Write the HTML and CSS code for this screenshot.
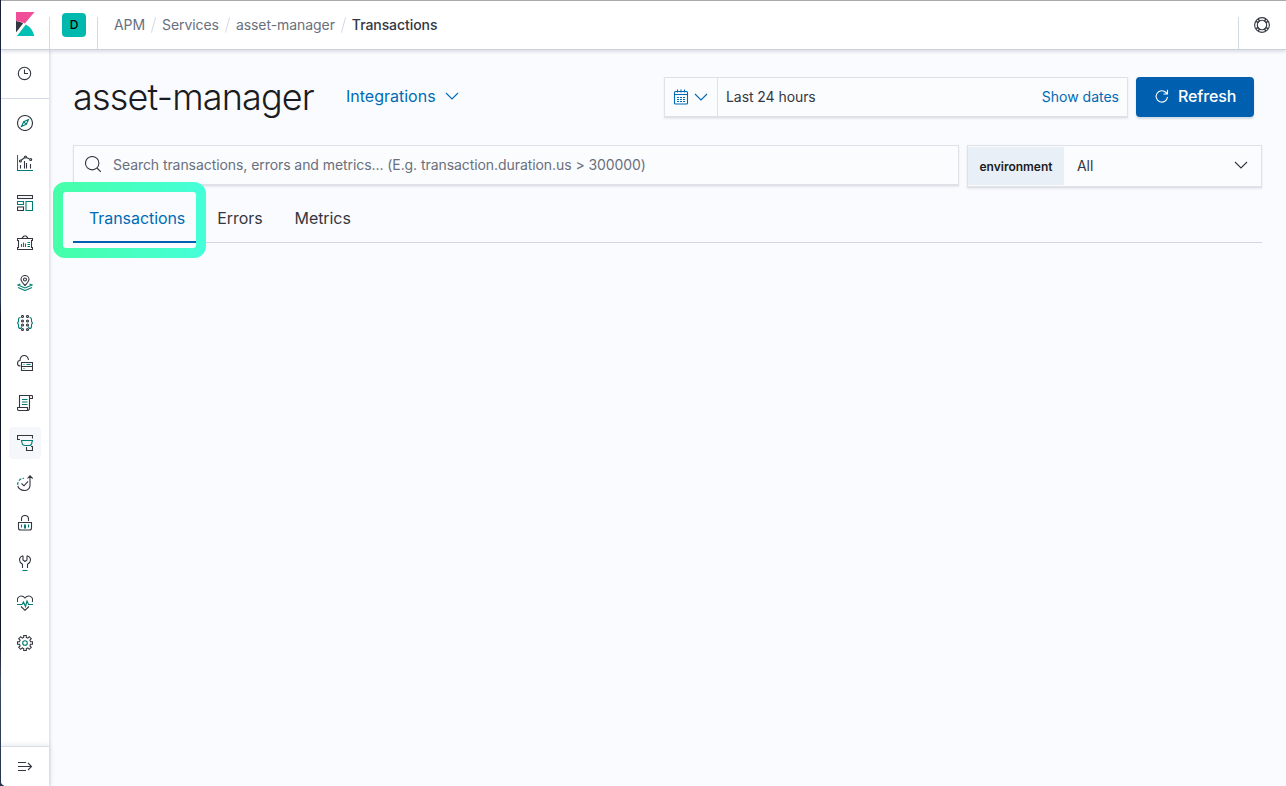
FILE: index.html
```html
<!DOCTYPE html>
<html lang="en">
<head>
<meta charset="utf-8">
<title>asset-manager - APM</title>
<link rel="stylesheet" href="styles.css">
</head>
<body>
<div class="app">
  <header class="header">
    <a class="logo"><svg width="24" height="26" viewBox="0 0 24 26"><path fill="#343741" d="M3 10v11.500L10.200 12.300A14 14 0 0 0 3 10z"/><path fill="#f04e98" d="M3 1h18.500L11.800 12.600A16 16 0 0 0 3 10z"/><path fill="#00bfb3" d="M12.800 13.500L4 25h17.300a17 17 0 0 0-8.500-11.500z"/></svg></a>
    <div class="space"><span class="avatar">D</span></div>
    <nav class="crumbs"><a>APM</a><i></i><a>Services</a><i></i><a>asset-manager</a><i></i><b>Transactions</b></nav>
    <div class="help"><svg class="icon" viewBox="0 0 16 16"><circle cx="8" cy="8" r="7.400"/><circle cx="8" cy="8" r="4.700"/><path stroke-width="1.500" d="M4.300 2l1.400 2.500M2 4.300l2.500 1.400M11.700 2l-1.400 2.500M14 4.300l-2.500 1.400M4.300 14l1.400-2.500M2 11.700l2.500-1.400M11.700 14l-1.400-2.500M14 11.700l-2.500-1.400"/></svg></div>
  </header>
  <aside class="side">
    <div class="recent"><svg class="icon" viewBox="0 0 16 16"><circle cx="7.500" cy="8.400" r="6.200"/><path d="M7.500 4.500v4h3.500"/></svg></div>
    <nav class="apps">
      <a><svg class="icon" viewBox="0 0 16 16"><circle cx="8" cy="8" r="7.500"/><path class="teal" d="M11.500 4.500L9.300 9.300 4.500 11.500l2.200-4.800zM6.700 6.700l2.600 2.600"/></svg></a>
      <a><svg class="icon" viewBox="0 0 16 16"><path class="teal" d="M.5 0v15.500H16"/><path d="M3.500 10v3.500M7.500 6v7.500M9.500 8v5.500M13.500 9v4.500M4.200 5.300l3.500-2.800M9.500 2.500l3 1.500"/><circle cx="3.400" cy="6" r="1"/><circle cx="8.500" cy="2" r="1"/><circle cx="13.700" cy="4.500" r="1"/></svg></a>
      <a><svg class="icon" viewBox="0 0 16 16"><rect x=".5" y=".5" width="15" height="3"/><rect x=".5" y="12" width="6" height="3.500"/><path class="teal" d="M.5 6.500h6v3h-6zM9 6.500h6.500v9H9z"/></svg></a>
      <a><svg class="icon" viewBox="0 0 16 16"><path d="M5 3l2-2h2l2 2M.5 3.500h15v2h-1v7h1v2H.5v-2h1v-7h-1z"/><path class="teal" d="M4.500 9v3M6.500 7.500V12M8.500 8.500V12M10.500 7.500h2.500M10.500 9.500h2.500M10.500 11.500h2.500"/></svg></a>
      <a><svg class="icon" viewBox="0 0 16 16"><path d="M8 10.500C5.500 8 4 6.500 4 4.300a4 3.800 0 0 1 8 0C12 6.500 10.500 8 8 10.500z"/><circle cx="8" cy="4.500" r="1.500"/><path class="teal" d="M3.500 9L1 10l7 3 7-3-2.500-1M1 12.500l7 3 7-3"/></svg></a>
      <a><svg class="icon" viewBox="0 0 16 16"><g><circle cx="5.500" cy="1.500" r="1"/><circle cx="10.500" cy="1.500" r="1"/><circle cx="5.500" cy="6" r="1"/><circle cx="10.500" cy="6" r="1"/><circle cx="5.500" cy="10" r="1"/><circle cx="10.500" cy="10" r="1"/><circle cx="5.500" cy="14.500" r="1"/><circle cx="10.500" cy="14.500" r="1"/></g><path class="teal" d="M3.500 2.500q-2 0-2 2v2L.5 8l1 1.500v2q0 2 2 2l1.500-2M12.500 2.500q2 0 2 2v2l1 1.500-1 1.500v2q0 2-2 2l-1.500-2"/></svg></a>
      <a><svg class="icon" viewBox="0 0 16 16"><path d="M3.500 11C1.500 11 .5 9.800.5 8.200S1.700 5.500 3 5.500C3 2.500 4.800.5 7.200.5c2.300 0 3.800 1.500 4.300 4.500M4.500 7.500h11v8h-11zM4.500 11.500h11"/><path class="teal" d="M6.500 9.500h1M6.500 13.500h1M9.500 9.500h4"/></svg></a>
      <a><svg class="icon" viewBox="0 0 16 16"><path d="M2.500 12V.5h12.200q.8 0 .8 1.200v1.800h-3M12.500 1v11.500M.5 12.500h10V15q0 .5 1 .5H2Q.5 15.500.5 14zM11 15.500q1.500 0 1.500-3"/><path class="teal" d="M5 4.500h5.500M5 7h5.500M5 9.500h5.500"/></svg></a>
      <a class="on"><svg class="icon" viewBox="0 0 16 16"><path d="M3 4.500H.5v-4h15v3M9.500 12v3.500h6v-4H14"/><path class="teal" d="M4.500 5.500h11l-1 3.500q-.5 1.500-2 1.500H8q-2.500 0-3-2.500z"/></svg></a>
      <a><svg class="icon" viewBox="0 0 16 16"><path d="M13 1v9.500c0 3-2.500 5-5.500 5S1.500 13.500.8 11M10.500 3.500L13 .8l2.700 2.700M4.500 8.500L7 10.800l4-4.500"/><path class="teal" stroke-dasharray="3 1.500" d="M.7 10C.5 6.500 3 3.300 7 3.300"/></svg></a>
      <a><svg class="icon" viewBox="0 0 16 16"><path d="M4.500 6V4a3.500 3.500 0 0 1 7 0v2M1.500 7.500h13V13q0 2-2 2h-9q-2 0-2-2z"/><path class="teal" d="M4.500 9.500v3M7.500 9.500v4M8.500 9.500v4M11.500 9.500v3"/></svg></a>
      <a><svg class="icon" viewBox="0 0 16 16"><path d="M6 .8C3.500 1.500 2.500 3 2.500 5c0 2 1 3 3 4.200V13M10 .8c2.500.7 3.500 2.200 3.500 4.200 0 2-1 3-3 4.200V13M6 .8V5l2 1.500L10 5V.8"/><path class="teal" d="M5.500 15.500h5"/></svg></a>
      <a><svg class="icon" viewBox="0 0 16 16"><path d="M.7 7C-.5 3 2 1 4.300 1 6 1 7.200 2 8 3c.8-1 2-2 3.700-2 2.300 0 4.800 2 3.600 6M4 11.500l4 3.800 4-3.800"/><path class="teal" d="M0 9.500h5L6.500 7l2 4.500L10 6l1.500 3.500H16"/></svg></a>
      <a><svg class="icon" viewBox="0 0 16 16"><path d="M6.700.5h2.600v2l1.500.6 1.500-1.400 2 2-1.400 1.500.6 1.500h2v2.600h-2l-.6 1.500 1.400 1.500-2 2-1.500-1.400-1.500.6v2H6.700v-2l-1.500-.6-1.500 1.400-2-2 1.400-1.500-.6-1.500h-2V6.700h2l.6-1.500-1.400-1.500 2-2 1.500 1.400 1.500-.6z"/><circle class="teal" cx="8" cy="8" r="2.300"/></svg></a>
    </nav>
    <div class="expand"><svg class="icon" viewBox="0 0 16 16"><path d="M1 3.500h8M1 7.500h13.500M1 11.500h8M11 4l3.500 3.500L11 11"/></svg></div>
  </aside>
  <main class="main">
    <div class="top">
      <h1>asset-manager</h1>
      <a class="integrations">Integrations<svg class="chev" viewBox="0 0 14 8"><path d="M1 1l6 6 6-6"/></svg></a>
      <div class="dates box">
        <div class="quick"><svg class="icon" viewBox="0 0 16 16"><rect x="1.500" y="2.500" width="13" height="12.500" rx="1"/><path d="M4.500.5v3M8 .5v3M11.500.5v3M1.500 5.500h13"/><path stroke-dasharray="2 1" d="M4 8.500h8M4 10.500h8M4 12.500h8"/></svg><svg class="chev" viewBox="0 0 14 8"><path d="M1 1l6 6 6-6"/></svg></div>
        <span class="range">Last 24 hours</span><a class="show">Show dates</a>
      </div>
      <button class="refresh"><svg class="icon" viewBox="0 0 16 16"><path d="M13.500 9A5.700 5.700 0 1 1 12 4.500L13.500 6M13.500 1.800V6H9.500"/></svg>Refresh</button>
    </div>
    <div class="filters">
      <div class="search box"><svg class="icon" viewBox="0 0 16 16"><circle cx="7.200" cy="7.200" r="6.700"/><path d="M12 12l4 4"/></svg><span>Search transactions, errors and metrics... (E.g. transaction.duration.us &gt; 300000)</span></div>
      <div class="env box"><label>environment</label><span>All</span><svg class="chev" viewBox="0 0 14 8"><path d="M1 1l6 6 6-6"/></svg></div>
    </div>
    <nav class="tabs"><a class="sel">Transactions</a><a>Errors</a><a>Metrics</a><div class="highlight"></div></nav>
  </main>
</div>
</body>
</html>
```
FILE: styles.css
```css
* { box-sizing: border-box; }
body { margin: 0; font: 14px/20px Inter, sans-serif; letter-spacing: -.07px; color: #343741; background: linear-gradient(#16203a, #2c3b5c 300px, #0c1122 320px, #101728 640px, #3b4862 680px, #26334d); }
.app { display: grid; grid-template: 49px 1fr / 48px 1fr; width: 1285px; height: 786px; margin-left: 1px; border-top: 1px solid #a9a9a9; background: #fafbff; border-bottom-left-radius: 5px; overflow: hidden; }
svg { flex: none; fill: none; stroke: #343741; stroke-width: 1.1; }
.icon { width: 16px; height: 16px; }
.teal { stroke: #017d73; }
.header { grid-column: 1 / 3; display: flex; background: #fff; border-bottom: 1px solid #cbd2de; box-shadow: 0 2px 3px rgba(152,162,179,.3); z-index: 2; }
.logo { width: 48px; padding: 10px 0 0 12px; }
.logo svg { stroke: none; display: block; }
.space { width: 49px; margin-top: 16px; border: solid #d3dae6; border-width: 0 1px; }
.avatar { display: block; width: 24px; height: 24px; margin: -4px 0 0 12px; border-radius: 4px; background: #00b9ae; color: #000; font: 500 12px/24px Inter, sans-serif; text-align: center; }
.crumbs { flex: 1; display: flex; align-items: center; padding-left: 16px; color: #69707d; }
.crumbs i { width: 1px; height: 16px; margin: 0 8px; background: #d3dae6; transform: rotate(15deg); }
.crumbs b { font-weight: 500; color: #343741; }
.help { width: 48px; margin-top: 16px; border-left: 1px solid #d3dae6; padding-left: 15px; }
.help svg { display: block; }
.side { display: flex; flex-direction: column; background: #fff; box-shadow: 0 0 0 1px #e2e5ec, 1px 0 3px rgba(152,162,179,.4); z-index: 1; }
.recent { height: 49px; padding: 15px 0 0 16px; border-bottom: 1px solid #d3dae6; }
.apps { flex: 1; padding: 8px 0 0 8px; display: flex; flex-direction: column; gap: 8px; }
.apps a { display: flex; align-items: center; justify-content: center; width: 32px; height: 32px; border-radius: 4px; }
.apps .on { background: #f5f7fa; }
.expand { height: 40px; padding: 12px 0 0 16px; border-top: 1px solid #d9dde5; box-shadow: 0 -1px 5px rgba(152,162,179,.25); }
.main { padding: 27px 24px 0; }
.top { display: flex; height: 40px; padding-right: 8px; }
h1 { margin: 0; width: 273px; font-size: 36px; line-height: 40px; font-weight: 300; letter-spacing: -.83px; color: #1a1c21; white-space: nowrap; }
.integrations { display: flex; align-items: center; gap: 9px; height: 38px; font-size: 16px; letter-spacing: 0; color: #006bb4; }
.chev { width: 14px; height: 8px; }
.integrations svg, .quick svg { stroke: #006bb4; }
.box { display: flex; align-items: center; background: #fbfcfd; border: 1px solid #dfe1e6; border-bottom-width: 2px; box-shadow: 0 1px 2px rgba(152,162,179,.2); }
.dates { width: 464px; height: 41px; margin-left: auto; }
.quick { display: flex; align-items: center; gap: 5px; align-self: stretch; width: 53px; padding-left: 8px; border-right: 1px solid #dfe1e6; }
.range { flex: 1; padding-left: 8px; }
.show { padding-right: 8px; color: #006bb4; letter-spacing: 0; }
.refresh { display: flex; align-items: center; gap: 8px; width: 118px; height: 40px; margin-left: 8px; padding: 0 0 2px 18px; border: 0; border-radius: 4px; background: #005fae; color: #fff; font: 500 16px/24px Inter, sans-serif; letter-spacing: -.12px; box-shadow: 0 2px 2px rgba(54,97,126,.2); }
.refresh svg { stroke: #fff; }
.filters { display: flex; gap: 8px; margin-top: 28px; }
.search { width: 886px; height: 41px; padding-left: 11px; gap: 12px; color: #69707d; }
.search svg { margin-top: -2px; }
.env { flex: 1; height: 43px; }
.env label { align-self: stretch; margin: 1px 0; width: 96px; background: #e9eff6; color: #1a1c21; font-size: 12px; font-weight: 600; letter-spacing: 0; line-height: 39px; text-align: center; }
.env span { flex: 1; padding-left: 13px; }
.env svg { margin: -2px 13px 0 0; }
.tabs { display: flex; position: relative; margin-top: 6px; height: 49px; border-bottom: 1px solid #cfd7e4; font-size: 16px; line-height: 24px; }
.tabs a { height: 49px; padding: 12px 16px; }
.tabs .sel { color: #006bb4; border-bottom: 2px solid #005fae; }
.highlight { position: absolute; left: -20px; top: -12px; width: 153px; height: 76px; border-radius: 12px; background: linear-gradient(90deg, #45ffa8, #45ffda); clip-path: path(evenodd, "M0 0H153V76H0ZM13 10H140Q143 10 143 13V63Q143 66 140 66H13Q10 66 10 63V13Q10 10 13 10Z"); }
```
